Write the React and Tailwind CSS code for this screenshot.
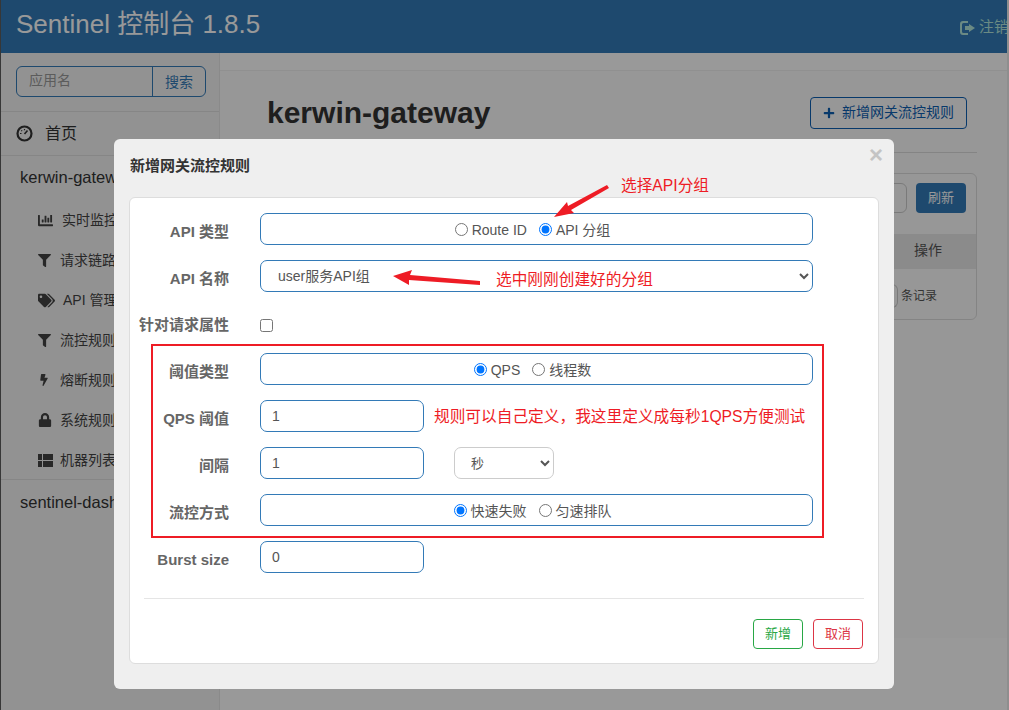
import React from "react";
import { FaFilter, FaTags, FaBolt, FaLock, FaPlus, FaChartBar } from "react-icons/fa";

const font = "font-['Liberation_Sans','Noto_Sans_CJK_SC',sans-serif]";

const GridIcon = () => (
  <svg width="15" height="13" viewBox="0 0 15 13" fill="currentColor">
    <rect x="0" y="0" width="4" height="6" />
    <rect x="5" y="0" width="10" height="6" />
    <rect x="0" y="7" width="4" height="6" />
    <rect x="5" y="7" width="10" height="6" />
  </svg>
);

const DashIcon = () => (
  <svg width="17" height="17" viewBox="0 0 17 17" fill="none" stroke="currentColor">
    <circle cx="8.5" cy="8.5" r="7" strokeWidth="2.2" />
    <path d="M8.5 9 L11.5 5.5" strokeWidth="1.6" />
    <path d="M4 8.5h1.5M8.5 4v1.2M5.3 5.3l.8.8" strokeWidth="1.2" />
  </svg>
);

const LogoutIcon = () => (
  <svg width="16" height="14" viewBox="0 0 16 14" fill="currentColor">
    <path d="M3 0h5v2H3.5A1.5 1.5 0 0 0 2 3.5v7A1.5 1.5 0 0 0 3.5 12H8v2H3a3 3 0 0 1-3-3V3a3 3 0 0 1 3-3z" />
    <path d="M9 3l6 4-6 4V9H5V5h4z" />
  </svg>
);

const menuItems = [
  { icon: <FaChartBar size={15} />, label: "实时监控", w: "w-[24px]" },
  { icon: <FaFilter size={13} />, label: "请求链路", w: "w-[22px]" },
  { icon: <FaTags size={17} />, label: "API 管理", w: "w-[25px]" },
  { icon: <FaFilter size={13} />, label: "流控规则", w: "w-[22px]" },
  { icon: <FaBolt size={12} />, label: "熔断规则", w: "w-[22px]" },
  { icon: <FaLock size={14} />, label: "系统规则", w: "w-[22px]" },
  { icon: <GridIcon />, label: "机器列表", w: "w-[22px]" },
];

const Sidebar = () => {
  return (
    <div className="w-[219px] shrink-0 bg-[#f4f4f4] h-full border-r border-[#e6e6e6]">
      <div className="h-[59px] pt-[13px] pl-[15px] border-b border-[#e0e0e0]">
        <div className="flex w-[190px] h-[31px] border border-[#337ab7] rounded-md text-[14px]">
          <div className="w-[136px] pl-3 text-[#999] leading-[27px] border-r border-[#337ab7]">应用名</div>
          <div className="flex-1 text-center text-[#337ab7] leading-[31px]">搜索</div>
        </div>
      </div>
      <div className="h-11 flex items-center pl-[15px] border-b border-[#e0e0e0] text-[#333]">
        <DashIcon />
        <span className="ml-[12px] text-[16px]">首页</span>
      </div>
      <div className="h-[324px] border-b border-[#e0e0e0]">
        <div className="h-[43px] pl-[19px] flex items-center text-[16.5px] text-[#333] whitespace-nowrap">kerwin-gateway</div>
        {menuItems.map((item) => (
          <div key={item.label} className="h-10 pl-[37px] pt-[2px] flex items-center text-[14px] text-[#444]">
            <span className={`${item.w} flex`}>{item.icon}</span>
            <span className="whitespace-nowrap">{item.label}</span>
          </div>
        ))}
      </div>
      <div className="h-11 pl-[19px] flex items-center text-[16.5px] text-[#333] whitespace-nowrap">sentinel-dashboard</div>
    </div>
  );
};

const Main = () => {
  return (
    <div className="flex-1 pt-[17px]">
      <div className="h-[568px] bg-[#fcfcfc] border-t border-[#f0f0f0] pl-[47px] pr-[30px]">
        <div className="flex items-center justify-between h-[82px] border-b border-[#ddd] pt-[2px]">
          <h1 className="text-[30px] font-bold text-[#333]">kerwin-gateway</h1>
          <button className="w-[157px] h-8 mr-[10px] flex items-center justify-center gap-[7px] border border-[#0d5fb3] rounded-[4px] text-[14px] text-[#0d5fb3]">
            <FaPlus size={12} />
            新增网关流控规则
          </button>
        </div>
        <div className="mt-5 h-[147px] border border-[#ddd] rounded-md">
          <div className="h-[60px] flex justify-end pt-[9px] pr-[10px]">
            <div className="w-[30px] h-[30px] mr-[9px] border border-[#ccc] rounded-md"></div>
            <div className="w-[50px] h-[30px] bg-[#337ab7] rounded text-white text-[13px] text-center leading-[30px]">刷新</div>
          </div>
          <div className="h-[35px] bg-[#e8e8e8] flex justify-end pr-[34px] pb-[2px] items-center text-[14px] text-[#555]">操作</div>
          <div className="h-[50px] flex justify-end pr-[39px] pt-[4px] items-center text-[12px] text-[#555]">
            <div className="w-[6px] h-[24px] mr-[3px] border border-[#ccc] rounded-r-md"></div>
            条记录
          </div>
        </div>
      </div>
    </div>
  );
};

const FormRow = ({ label, className = "", labelClass = "pt-[6px]", children }) => {
  return (
    <div className={`flex items-center ${className}`}>
      <label className={`w-[99px] shrink-0 flex justify-end text-[15px] font-bold text-[#666] whitespace-nowrap ${labelClass}`}>{label}</label>
      <div className="ml-[31px] flex-1">{children}</div>
    </div>
  );
};

const box = "h-8 border border-[#337ab7] rounded-[7px]";

const RadioBox = ({ name, options }) => {
  return (
    <div className={`${box} flex items-center justify-center gap-[12px] pr-[8px] pt-[3px] text-[14px] text-[#555]`}>
      {options.map((opt) => (
        <label key={opt.label} className="flex items-center whitespace-nowrap">
          <input type="radio" name={name} defaultChecked={opt.checked} className="w-[13px] h-[13px] mr-[4px] mb-[2px]" />
          {opt.label}
        </label>
      ))}
    </div>
  );
};

const NumberBox = ({ value }) => {
  return (
    <div className={`${box} w-[164px] pl-[11px] text-[14px] leading-[31px] text-[#555]`}>{value}</div>
  );
};

const Arrow = ({ className, points, viewBox }) => {
  return (
    <svg className={`absolute ${className}`} viewBox={viewBox}>
      <polygon points={points} fill="#ee1c25" />
    </svg>
  );
};

const Modal = () => {
  return (
    <div className="absolute left-[114px] top-[139px] w-[780px] h-[550px] bg-[#efefef] rounded-md px-[15px] pt-[58px]">
      <div className="absolute left-[16px] top-[16px] text-[15px] font-bold text-[#333]">新增网关流控规则</div>
      <div className="absolute right-[11px] top-[4px] text-[24px] leading-[24px] font-bold text-[#c4c4c4]">×</div>

      <div className="h-[467px] bg-white border border-[#ddd] rounded-md pt-[15px]">
        <div className="w-[683px]">
          <FormRow label="API 类型" className="mb-[15px]">
            <RadioBox name="apiType" options={[{ label: "Route ID" }, { label: "API 分组", checked: true }]} />
          </FormRow>
          <FormRow label="API 名称" className="mb-[15px]">
            <select className={`${box} w-full pl-[13px] text-[14px] text-[#555] bg-white`} defaultValue="user服务API组">
              <option>user服务API组</option>
            </select>
          </FormRow>
          <FormRow label="针对请求属性" className="h-[31px] mb-[15px] pt-[6px]" labelClass="">
            <input type="checkbox" className="block w-[13px] h-[13px]" />
          </FormRow>
          <FormRow label="阈值类型" className="mb-[15px]">
            <RadioBox name="gradeType" options={[{ label: "QPS", checked: true }, { label: "线程数" }]} />
          </FormRow>
          <FormRow label="QPS 阈值" className="mb-[15px]">
            <NumberBox value="1" />
          </FormRow>
          <FormRow label="间隔" className="mb-[15px]">
            <div className="flex items-center">
              <NumberBox value="1" />
              <select className="ml-[30px] w-[100px] h-8 pl-[12px] border border-[#ccc] rounded-[7px] text-[13px] text-[#555] bg-white" defaultValue="秒">
                <option>秒</option>
              </select>
            </div>
          </FormRow>
          <FormRow label="流控方式" className="mb-[15px]">
            <RadioBox name="controlType" options={[{ label: "快速失败", checked: true }, { label: "匀速排队" }]} />
          </FormRow>
          <FormRow label="Burst size">
            <NumberBox value="0" />
          </FormRow>
        </div>
        <div className="mx-[14px] mt-[25px] border-t border-[#e5e5e5]"></div>
        <div className="flex justify-end gap-[10px] mt-5 mr-[15px]">
          <button className="w-[50px] h-[30px] border border-[#28a745] rounded-[4px] text-[13px] text-[#28a745]">新增</button>
          <button className="w-[50px] h-[30px] border border-[#dc3545] rounded-[4px] text-[13px] text-[#dc3545]">取消</button>
        </div>
      </div>

      {/* annotations */}
      <div className="absolute left-[37px] top-[205px] w-[673px] h-[194px] border-2 border-[#ee1c25] pointer-events-none"></div>
      <div className="absolute left-[507px] top-[37px] text-[15.7px] leading-5 text-[#ee1c25] whitespace-nowrap">选择API分组</div>
      <div className="absolute left-[382px] top-[131px] text-[15.7px] leading-5 text-[#ee1c25] whitespace-nowrap">选中刚刚创建好的分组</div>
      <div className="absolute left-[320px] top-[268px] text-[15.7px] leading-5 text-[#ee1c25] whitespace-nowrap">规则可以自己定义，我这里定义成每秒1QPS方便测试</div>
      <Arrow className="left-[440px] top-[46px] w-[56px] h-[32px]" viewBox="0 0 56 32" points="0,32 13,17 14,21 53,0 55,3 17,25 20,28" />
      <Arrow className="left-[279px] top-[131px] w-[88px] h-[18px]" viewBox="0 0 88 18" points="0,6 19,0 17,5 87,11 87,15 16,10 16,15" />
    </div>
  );
};

export default function App() {
  return (
    <div className={`${font} relative w-[1009px] h-[710px] overflow-hidden bg-white flex`}>
      <div className="w-px bg-[#5c5c5c] shrink-0"></div>
      <div className="flex-1 min-w-0 flex flex-col">
        <div className="h-[53px] bg-[#337ab7] flex items-center justify-between pl-[15px] shrink-0 overflow-hidden">
          <span className="text-[26px] text-white pb-[5px] whitespace-nowrap">Sentinel 控制台 1.8.5</span>
          <span className="flex items-center shrink-0 gap-[3px] text-[15px] text-[#b2e6dc] whitespace-nowrap -mr-[2px] pt-[2px]">
            <LogoutIcon />
            注销
          </span>
        </div>
        <div className="flex flex-1 min-h-0">
          <Sidebar />
          <Main />
        </div>
      </div>
      <div className="w-[2px] bg-[#ededed] shrink-0"></div>
      <div className="absolute inset-0 bg-black/40"></div>
      <Modal />
    </div>
  );
}
